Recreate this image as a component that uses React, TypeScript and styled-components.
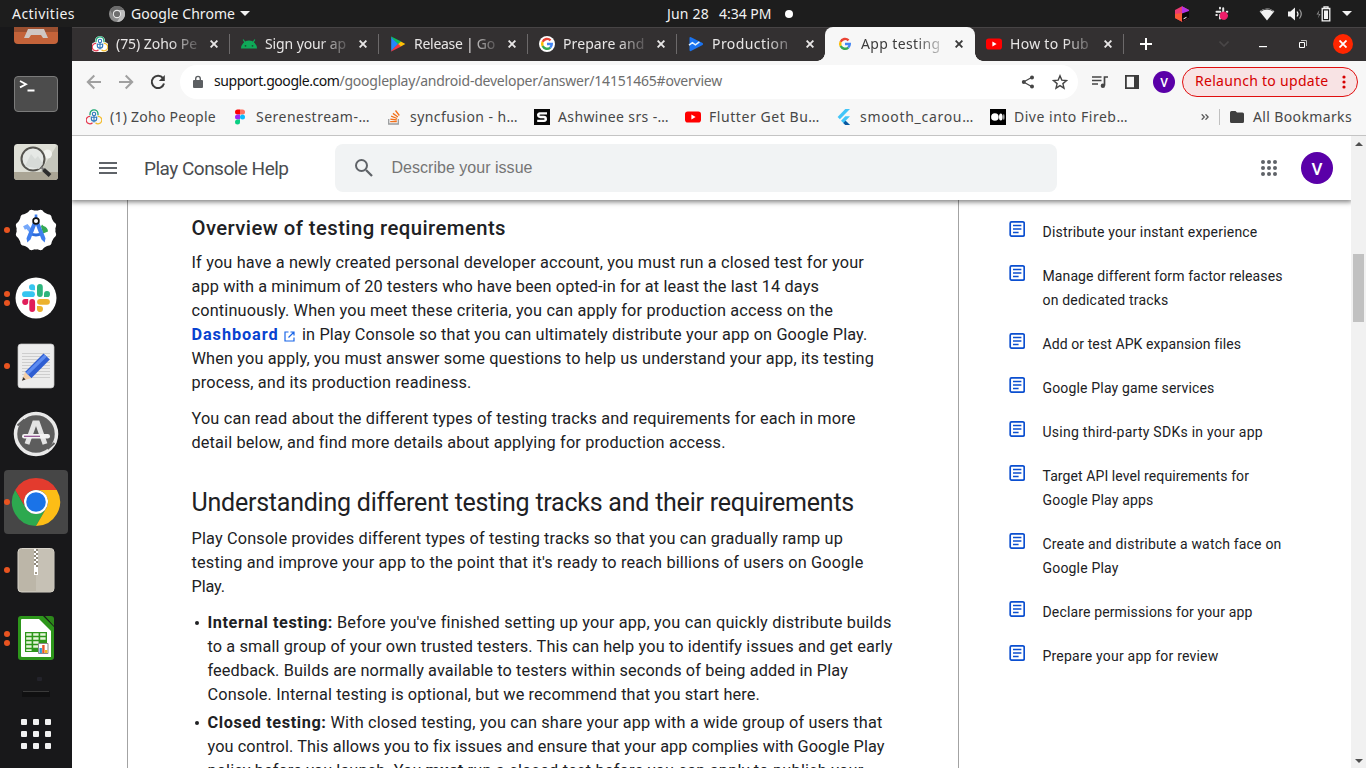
import React, { useLayoutEffect, useRef, useState } from 'react';
import styled, { createGlobalStyle, css } from 'styled-components';

const shellFont = "'Noto Sans', 'Open Sans', sans-serif";
const pageFont = "Roboto, 'Liberation Sans', sans-serif";

const GlobalStyle = createGlobalStyle`
  * { box-sizing: border-box; }
  body { margin: 0; background: #1d1d1d; overflow: hidden; }
  svg { display: block; flex: none; }
`;

/* ---------- text tracked to a set width ---------- */

const Tracked = styled.span`
  display: inline-block;
  white-space: nowrap;
  flex: none;
`;

function Fit({ w, children }: { w: number; children: React.ReactNode }) {
  const ref = useRef<HTMLSpanElement>(null);
  const [spacing, setSpacing] = useState(0);
  useLayoutEffect(() => {
    const el = ref.current;
    if (!el) return;
    const previous = el.style.letterSpacing;
    el.style.letterSpacing = '0px';
    const natural = el.getBoundingClientRect().width;
    el.style.letterSpacing = previous;
    const count = (el.textContent || '').length;
    if (count > 0) setSpacing((w - natural) / count);
  }, [w]);
  return (
    <Tracked ref={ref} style={{ letterSpacing: `${spacing}px` }}>
      {children}
    </Tracked>
  );
}

/* ---------- desktop frame ---------- */

const Desktop = styled.div`
  width: 1366px;
  height: 768px;
  display: grid;
  grid-template-rows: 27px 741px;
  overflow: hidden;
  font-family: ${shellFont};
`;

const TopBar = styled.header`
  display: grid;
  grid-template-columns: 1fr auto 1fr;
  align-items: center;
  background: #1d1d1d;
  color: #f2f2f2;
  font-size: 14px;
  line-height: 26px;
  z-index: 2;
`;

const TopGroup = styled.div<{ $end?: boolean }>`
  display: flex;
  align-items: center;
  height: 27px;
  ${(p) => p.$end && css`justify-content: flex-end;`}
`;

const Space = styled.span<{ $w: number }>`
  flex: none;
  width: ${(p) => p.$w}px;
`;

const Caret = styled.span`
  border: 5px solid transparent;
  border-top-color: #f2f2f2;
  border-bottom: 0;
`;

const Dot = styled.span`
  width: 8px;
  height: 8px;
  border-radius: 50%;
  background: #fff;
`;

const Workspace = styled.div`
  display: flex;
  min-height: 0;
`;

const Dock = styled.nav`
  width: 72px;
  flex: none;
  background: #18181a;
  overflow: hidden;
  display: flex;
  flex-direction: column;
`;

const DockApps = styled.div`
  height: 673px;
  flex: none;
  overflow: hidden;
  display: flex;
  flex-direction: column;
  justify-content: flex-end;
`;

const DockItem = styled.div<{ $h?: number }>`
  height: ${(p) => p.$h ?? 68}px;
  flex: none;
  display: flex;
  align-items: center;
  padding: 0 4px;
`;

const DockTile = styled.div<{ $active?: boolean }>`
  width: 64px;
  height: 64px;
  border-radius: 4px;
  background: ${(p) => (p.$active ? '#464646' : 'transparent')};
  display: flex;
  align-items: center;
`;

const Running = styled.div`
  width: 6px;
  display: flex;
  flex-direction: column;
  gap: 3px;
`;

const RunDot = styled.span`
  width: 6px;
  height: 6px;
  border-radius: 50%;
  background: #e95420;
`;

const DockIcon = styled.svg`
  width: 52px;
  height: 52px;
`;

/* ---------- browser chrome ---------- */

const Browser = styled.main`
  flex: 1;
  min-width: 0;
  display: flex;
  flex-direction: column;
  background: #fff;
`;

const TabStrip = styled.div`
  height: 34px;
  flex: none;
  display: flex;
  align-items: center;
  padding-left: 8px;
  background: #333031;
  box-shadow: inset 0 1px #474445;
`;

const TabBox = styled.div<{ $active?: boolean; $bar?: boolean }>`
  position: relative;
  width: 149px;
  height: 34px;
  flex: none;
  display: flex;
  align-items: center;
  padding-left: 12px;
  font-size: 14px;
  color: ${(p) => (p.$active ? '#3c3c3c' : '#e8e6e6')};
  ${(p) =>
    p.$bar &&
    css`
      &::after {
        content: '';
        position: absolute;
        right: -1px;
        top: 7px;
        width: 1px;
        height: 20px;
        background: #6c696a;
      }
    `}
  ${(p) =>
    p.$active &&
    css`
      width: 150px;
      margin-right: -1px;
      background: #f7f7f7;
      border-radius: 8px 8px 0 0;
      &::before,
      &::after {
        content: '';
        position: absolute;
        bottom: 0;
        width: 8px;
        height: 8px;
      }
      &::before {
        left: -8px;
        background: radial-gradient(circle at 0 0, transparent 7.5px, #f7f7f7 8px);
      }
      &::after {
        right: -8px;
        background: radial-gradient(circle at 100% 0, transparent 7.5px, #f7f7f7 8px);
      }
    `}
`;

const TabTitle = styled.span`
  width: 82px;
  margin-left: 8px;
  white-space: nowrap;
  line-height: 20px;
  mask-image: linear-gradient(90deg, #000 66%, transparent 108%);
`;

const CloseMark = styled.svg`
  width: 8px;
  height: 8px;
  margin-left: 12px;
  fill: none;
  stroke: currentColor;
  stroke-width: 1.9;
`;

const WindowClose = styled.span`
  width: 20px;
  height: 20px;
  border-radius: 50%;
  background: #ff2600;
  display: flex;
  align-items: center;
  justify-content: center;
`;

const Toolbar = styled.div`
  height: 42px;
  flex: none;
  display: flex;
  align-items: center;
  background: #f7f7f7;
  padding: 0 8px 0 14px;
`;

const NavIcon = styled.svg<{ $dim?: boolean }>`
  width: 16px;
  height: 16px;
  margin-right: 16px;
  fill: none;
  stroke: ${(p) => (p.$dim ? '#a0a0a0' : '#3c3c3c')};
  stroke-width: 2;
`;

const AddressBar = styled.div`
  width: 898px;
  height: 34px;
  margin-left: -2px;
  border-radius: 17px;
  background: #fff;
  display: flex;
  align-items: center;
  padding: 0 10px 0 12px;
  font-size: 14px;
  color: #6e6e6e;
`;

const Url = styled.span`
  display: flex;
  line-height: 20px;
  padding-bottom: 2px;
  b { font-weight: 400; color: #111; }
`;

const Grow = styled.span`
  flex: 1;
`;

const Avatar = styled.span<{ $d: number; $font: number }>`
  width: ${(p) => p.$d}px;
  height: ${(p) => p.$d}px;
  border-radius: 50%;
  background: #5a00a8;
  color: #fff;
  display: flex;
  align-items: center;
  justify-content: center;
  flex: none;
  padding-top: 1px;
  font: 500 ${(p) => p.$font}px ${pageFont};
`;

const Relaunch = styled.button`
  width: 176px;
  height: 30px;
  flex: none;
  margin: 0 0 0 7px;
  padding: 0 11px 0 12px;
  border: 1px solid #e00f0f;
  border-radius: 15px;
  background: #f8e3e4;
  color: #d50000;
  display: flex;
  align-items: center;
  justify-content: space-between;
  font: 14px/20px ${shellFont};
  span { padding-bottom: 2px; }
`;

const Bookmarks = styled.div`
  height: 33px;
  flex: none;
  display: flex;
  align-items: center;
  padding: 0 14px 4px;
  background: #f7f7f7;
  border-bottom: 1px solid #c4c4c4;
  color: #474747;
  font-size: 14px;
  line-height: 20px;
`;

const Bookmark = styled.div`
  display: flex;
  align-items: center;
  gap: 8px;
  margin-right: 16px;
`;

const Divider = styled.span`
  width: 1px;
  height: 16px;
  background: #c0c0c0;
`;

/* ---------- page ---------- */

const Viewport = styled.div`
  flex: 1;
  min-height: 0;
  display: flex;
`;

const Page = styled.div`
  width: 1279px;
  display: flex;
  flex-direction: column;
  overflow: hidden;
  font-family: ${pageFont};
  color: #202124;
`;

const PageHeader = styled.div`
  height: 64px;
  flex: none;
  display: flex;
  align-items: center;
  padding: 0 18px 0 27px;
  background: #fff;
  box-shadow: 0 1px 5px 1px rgba(0, 0, 0, 0.5);
  z-index: 1;
`;

const PageTitle = styled.div`
  width: 191px;
  margin-left: 27px;
  padding-top: 2px;
  font-size: 19px;
  line-height: 24px;
  color: #4a4c50;
`;

const SearchBox = styled.div`
  width: 722px;
  height: 48px;
  border-radius: 8px;
  background: #f1f3f4;
  display: flex;
  align-items: center;
  padding: 0 0 1px 17px;
  gap: 15.5px;
  font: 16px 'Liberation Sans', sans-serif;
  color: #757575;
`;

const Columns = styled.div`
  flex: 1;
  min-height: 0;
  display: flex;
  padding-left: 55px;
`;

const Article = styled.article`
  width: 832px;
  flex: none;
  border: solid #a3a3a3;
  border-width: 0 1px;
  padding: 16px 0 0 63.5px;
  font-size: 16.3px;
  line-height: 24px;
  overflow: hidden;
`;

const Subheading = styled.h3`
  margin: 0 0 11px;
  font-size: 20.3px;
  line-height: 24px;
  font-weight: 500;
`;

const Heading = styled.h2`
  margin: 32px 0 8px;
  font-size: 25px;
  line-height: 32px;
  font-weight: 400;
`;

const Paragraph = styled.p`
  margin: 0 0 12px;
`;

const Line = styled.span`
  display: flex;
  height: 24px;
  white-space: pre;
`;

const Bullets = styled.ul`
  margin: 0;
  padding: 0;
  list-style: none;
`;

const Bullet = styled.li`
  position: relative;
  margin-bottom: 4px;
  padding-left: 16px;
  b { font-weight: 700; }
  &::before {
    content: '';
    position: absolute;
    left: 3px;
    top: 10px;
    width: 4px;
    height: 4px;
    border-radius: 50%;
    background: #202124;
  }
`;

const DashLink = styled.a`
  display: flex;
  align-items: center;
  width: 110.5px;
  font-weight: 700;
  color: #0842d0;
  svg { margin: 2px 0 0 5px; }
`;

const Aside = styled.aside`
  display: flex;
  flex-direction: column;
  gap: 20px;
  padding: 20px 0 0 50px;
  font-size: 14px;
  line-height: 24px;
`;

const AsideItem = styled.div`
  display: flex;
  gap: 17.5px;
  svg { margin-top: 1px; }
`;

const Scrollbar = styled.div`
  width: 15px;
  flex: none;
  background: #f1f1f1;
  display: flex;
  flex-direction: column;
  align-items: center;
  padding: 6px 0 5px;
  justify-content: space-between;
`;

const ScrollTrack = styled.div`
  flex: 1;
  padding-top: 108px;
`;

const Thumb = styled.div`
  width: 11px;
  height: 68px;
  background: #c1c1c1;
`;

const ScrollArrow = styled.span<{ $down?: boolean }>`
  border: 4px solid transparent;
  ${(p) => (p.$down ? 'border-top-color: #505050; border-bottom: 0;' : 'border-bottom-color: #505050; border-top: 0;')}
`;

/* ---------- small logos ---------- */

const ZohoIcon = ({ light }: { light?: boolean }) => (
  <svg width="16" height="16" viewBox="0 0 16 16" fill="none" strokeWidth="1.3">
    {light && <path d="M8 0a5 5 0 0 1 5 6a5 5 0 0 1-2 10H5A5 5 0 0 1 3 6a5 5 0 0 1 5-6z" fill="#fff" />}
    <path d="M4 6.200V4.900a4 4 0 0 1 8 0v1.300" stroke="#1ca672" />
    <path d="M4.200 7.400a3.700 3.700 0 1 0 2.300 6.300" stroke="#e5384f" />
    <path d="M11.800 7.400a3.700 3.700 0 1 1-2.300 6.300" stroke="#f4bd2d" />
    <circle cx="8" cy="5" r="1.700" stroke="#2d78bc" strokeWidth="1.100" />
    <path d="M5.300 7.500v2a2.700 2.700 0 0 0 5.400 0v-2M5.300 8.200h5.400M8 7v6.500" stroke="#2d78bc" strokeWidth="1.100" />
  </svg>
);

const AndroidIcon = () => (
  <svg width="16" height="16" viewBox="0 0 16 16">
    <path d="M0 12.600a8 8 0 0 1 16 0z" fill="#0fa958" />
    <path d="M2.200 3.500l2.300 4M13.800 3.500l-2.300 4" stroke="#0fa958" strokeWidth="1.200" />
    <circle cx="4.500" cy="9.800" r=".9" fill="#1b4b34" />
    <circle cx="11.500" cy="9.800" r=".9" fill="#1b4b34" />
  </svg>
);

const PlayIcon = () => (
  <svg width="16" height="16" viewBox="0 0 16 16">
    <path d="M1.200.8v14.400L8.500 8z" fill="#2486fb" />
    <path d="M1.200.6l10 5L8.300 8.300 1 1z" fill="#0bc15c" />
    <path d="M1.200 15.400l10-5L8.300 7.700 1 15z" fill="#f4353f" />
    <path d="M10.900 5.400L15.300 8l-4.400 2.600L8.200 8z" fill="#ffc107" />
  </svg>
);

const GoogleIcon = ({ disc }: { disc?: boolean }) => (
  <svg width="16" height="16" viewBox="0 0 16 16" fill="none" strokeWidth="2.500">
    {disc && <circle cx="8" cy="8" r="8" fill="#fff" />}
    <g transform="translate(0.3 0.3) scale(.96)">
      <path d="M11.700 4.200A5 5 0 0 0 3.500 5.800" stroke="#ea4335" />
      <path d="M3.500 5.800a5 5 0 0 0 0 4.400" stroke="#fbbc05" />
      <path d="M3.500 10.200a5 5 0 0 0 7.900 1.500" stroke="#34a853" />
      <path d="M11.400 11.700A5 5 0 0 0 13 8H8" stroke="#4285f4" />
    </g>
  </svg>
);

const ConsoleIcon = () => (
  <svg width="16" height="16" viewBox="0 0 16 16">
    <path d="M1.500 2Q1.500.4 3 1.200L14.600 7Q15.600 8 14.600 9L3 15Q1.500 15.600 1.500 14z" fill="#1a73f0" />
    <path d="M1 9.200l3.400-2.600 3 2.200 4-3" fill="none" stroke="#e4f3ff" strokeWidth="1.500" />
  </svg>
);

const YoutubeIcon = () => (
  <svg width="16" height="16" viewBox="0 0 16 16">
    <rect y="2.400" width="16" height="11.200" rx="2.800" fill="#f00" />
    <path d="M6.400 5.600v4.800L10.600 8z" fill="#fff" />
  </svg>
);

const FigmaIcon = () => (
  <svg width="16" height="16" viewBox="0 0 16 16">
    <path d="M8 .5H5.500a2.500 2.500 0 0 0 0 5H8z" fill="#f00" />
    <path d="M8 .5h2.500a2.500 2.500 0 0 1 0 5H8z" fill="#ff7262" />
    <path d="M8 5.500H5.500a2.500 2.500 0 0 0 0 5H8z" fill="#9d28f5" />
    <circle cx="10.500" cy="8" r="2.500" fill="#0cbcfe" />
    <path d="M8 10.500H5.500a2.500 2.500 0 1 0 2.500 2.500z" fill="#0acf83" />
  </svg>
);

const StackIcon = () => (
  <svg width="16" height="16" viewBox="0 0 16 16" fill="none" strokeWidth="1.300">
    <path d="M2.700 10v5h9.600v-5" stroke="#9a9c9e" />
    <path d="M4.200 12.600h6.600M4.300 10.100l6.500.9M5.100 7.200l6 2.300M6.900 4.400l5 3.600M9.500 1.500l3.800 5" stroke="#f2711c" />
  </svg>
);

const SquareIcon = () => (
  <svg width="16" height="16" viewBox="0 0 16 16" fill="none">
    <path d="M0 0h16v16H0z" fill="#080808" />
    <path d="M13 4.300H6.500Q4.200 4.300 4.200 6.100T6.500 8h3.300q2 0 2 1.900t-2 1.900H3.200" stroke="#fff" strokeWidth="2.300" />
    <path d="M6 2.800L3.200 5.300v1.500zM10 13.200l2.800-2.500V9.200z" fill="#fff" />
  </svg>
);

const FlutterIcon = () => (
  <svg width="16" height="16" viewBox="0 0 16 16">
    <path d="M9.300 0H14L3.900 10.200 1.600 8z" fill="#42c5f8" />
    <path d="M9.300 7.300H14L9.600 11.700 14 16H9.300L5 11.700z" fill="#42c5f8" />
    <path d="M7.300 14l2.300-2.300L14 16H9.300z" fill="#0b579f" />
  </svg>
);

const MediumIcon = () => (
  <svg width="16" height="16" viewBox="0 0 16 16" fill="#fff">
    <path d="M0 0h16v16H0z" fill="#000" />
    <circle cx="4.900" cy="8" r="3.800" />
    <ellipse cx="10.800" cy="8" rx="1.800" ry="3.500" />
    <ellipse cx="13.800" cy="8" rx=".7" ry="3" fill="#bbb" />
  </svg>
);

const ArticleIcon = () => (
  <svg width="16" height="16" viewBox="0 0 16 16" fill="none" stroke="#0b4fd0" strokeWidth="1.700">
    <rect x="1.200" y=".9" width="14" height="14.200" rx="1.300" />
    <path d="M4 4.500h8.400M4 8h8.400M4 11.500h5.600" strokeWidth="1.500" />
  </svg>
);

const AppGrid = ({ color }: { color: string }) => (
  <svg width="16" height="16" viewBox="0 0 16 16" fill={color}>
    {[2, 8, 14].map((y) => [2, 8, 14].map((x) => <circle key={`${x}-${y}`} cx={x} cy={y} r="2" />))}
  </svg>
);

const Cross = () => (
  <CloseMark viewBox="0 0 8 8">
    <path d="M.6.6l6.800 6.800M7.400.6L.6 7.400" />
  </CloseMark>
);

/* ---------- dock drawings (52 × 52, centred on 26,26) ---------- */

const dockArt: Record<string, React.ReactNode> = {
  software: (
    <>
      <rect x="4" y="4" width="44" height="40" rx="4" fill="#c4633a" />
      <path d="M4 26h44v6H4z" fill="#9a4f30" />
      <path d="M14 38l4-9h16l4 9h-5l-2-3H21l-2 3z" fill="#cfc6c3" />
    </>
  ),
  terminal: (
    <>
      <rect x="4.500" y="8.500" width="43" height="35" rx="3.500" fill="#4c4c4c" stroke="#7b7b7b" />
      <path d="M10 13l6 3.200-6 3.200M17.500 22.500h7" fill="none" stroke="#fff" strokeWidth="1.800" />
    </>
  ),
  viewer: (
    <>
      <rect x="4" y="8" width="44" height="36" rx="3.500" fill="#dedfd6" />
      <path d="M4 36h44v4.500a3.500 3.500 0 0 1-3.500 3.500h-37A3.500 3.500 0 0 1 4 40.500z" fill="#aaa595" />
      <path d="M30 36L47 9q1 1 1 2v25z" fill="#c5c6bc" />
      <circle cx="37.500" cy="18" r="4.500" fill="#f2f3ef" />
      <circle cx="23" cy="23" r="11.500" fill="#e6e9e6" stroke="#55544f" strokeWidth="2" />
      <path d="M15 30l6-12 4 5 3-3 5 8-4 5z" fill="#d7dbd8" />
      <path d="M31 31l3 3" stroke="#777" strokeWidth="2" />
      <path d="M33.500 33.500l6.500 6" stroke="#2d2d2d" strokeWidth="4" />
    </>
  ),
  studio: (
    <>
      {[0, 30, 60].map((a) => (
        <rect key={a} x="10.300" y="10.300" width="31.400" height="31.400" rx="4" fill="#fff" transform={`rotate(${a} 26 26)`} />
      ))}
      <circle cx="26" cy="26" r="19.500" fill="#fff" />
      <path d="M31 22.500l1-2 1.500 1.500a6 6 0 0 1 4.500 5.500l-5 2z" fill="#34a853" />
      <path d="M14 24l3-1.500 5 6" fill="none" stroke="#75a8fa" strokeWidth="4" />
      <path d="M20.500 29.500q5.500 3 11 0" fill="none" stroke="#2b6bdc" strokeWidth="3" />
      <path d="M25 13l3 3-7.500 19.500-3.200 3-.8-4.200zM27 13l-3 3 7.500 19.500 3.200 3 .8-4.200z" fill="#3f7fee" />
      <path d="M24.700 10.500h2.600v4h-2.600z" fill="#3f7fee" />
      <circle cx="26" cy="17" r="2.900" fill="#fff" stroke="#111" strokeWidth="1.700" />
    </>
  ),
  slack: (
    <>
      <circle cx="26" cy="26" r="20.500" fill="#fff" />
      <g strokeWidth="5.800" strokeLinecap="round">
        <path d="M15 22.200h7" stroke="#36c5f0" />
        <path d="M29.900 15v7" stroke="#2eb67d" />
        <path d="M30 29.800h7" stroke="#ecb22e" />
        <path d="M22.200 30v7" stroke="#e01e5a" />
      </g>
      <path d="M25 18.200v-2.600a3 3 0 1 0-3 2.600z" fill="#36c5f0" />
      <path d="M34 25.100h2.800a3 3 0 1 0-2.800-3z" fill="#2eb67d" />
      <path d="M27 34v2.800a3 3 0 1 0 3-2.800z" fill="#ecb22e" />
      <path d="M18.200 27h-2.800a3 3 0 1 0 2.800 3z" fill="#e01e5a" />
    </>
  ),
  editor: (
    <>
      <rect x="8" y="4" width="36" height="44" rx="3" fill="#ececec" stroke="#c9c9c9" strokeWidth=".7" />
      <path d="M12 13.500h28M12 16.500h28M12 19.500h28M12 22.500h28M12 25.500h28M12 28.500h28M12 31.500h28M12 34.500h28M12 37.500h28" stroke="#c6c6c6" strokeWidth=".8" />
      <path d="M33.500 13.500l6.300 6L21.300 38.300 15 32z" fill="#2f5ed2" />
      <path d="M34.500 14.500l2.300 2.200L18 35l-2.200-2.200z" fill="#5e8cf0" />
      <path d="M15 32L12 40.500l9.300-2.200z" fill="#f4cfa8" />
      <path d="M13.300 37.300l-1.400 3.500 3.700-1.200z" fill="#333" />
    </>
  ),
  updater: (
    <>
      <circle cx="26" cy="26" r="20.500" fill="#5d5d5d" stroke="#e9e9e9" strokeWidth="3.500" />
      <path d="M7.500 17.500l7-6M37.500 41l7-6" stroke="#5d5d5d" strokeWidth="2" />
      <path d="M17 36l7.500-21h3L35 36" fill="none" stroke="#e4e4e4" strokeWidth="5" />
      <rect x="12" y="26" width="28" height="4.600" rx="2.300" fill="#f3f3f3" />
      <path d="M14 28.300h16" stroke="#8c4a8c" strokeWidth="1.200" />
    </>
  ),
  chrome: (
    <>
      <path d="M5.200 14A24 24 0 0 1 46.800 14H26a12 12 0 0 0-10.400 18z" fill="#e33b2e" />
      <path d="M5.200 14A24 24 0 0 0 26 50l10.400-18A12 12 0 0 1 15.600 32z" fill="#2da94f" />
      <path d="M46.800 14A24 24 0 0 1 26 50l10.400-18A12 12 0 0 0 26 14z" fill="#fdbd16" />
      <circle cx="26" cy="26" r="12" fill="#fff" />
      <circle cx="26" cy="26" r="9.800" fill="#1a73e8" />
    </>
  ),
  archive: (
    <>
      <rect x="8" y="4.500" width="36" height="43.500" rx="3.500" fill="#bcb6a8" stroke="#d8d4ca" />
      <path d="M26 5v42.500h14.500a3 3 0 0 0 3-3V8a3 3 0 0 0-3-3z" fill="#c6c1b5" />
      <path d="M24 5h4v18h-4z" fill="#8f897b" />
      <path d="M25 5v18M27 7v16" stroke="#fff" strokeWidth="2" strokeDasharray="2 2" />
      <path d="M24 23h4v8h-4z" fill="#fff" />
      <path d="M25 28h2v2h-2z" fill="#a59e8e" />
    </>
  ),
  calc: (
    <>
      <path d="M11 4h22l11 11v30a3 3 0 0 1-3 3H11a3 3 0 0 1-3-3V7a3 3 0 0 1 3-3z" fill="#2d961b" />
      <path d="M12 7h17l12 12v26H12q-1 0-1-1V8q0-1 1-1z" fill="#fff" />
      <path d="M35 4h6q3 0 3 3v7z" fill="#2d871b" />
      <path d="M15 20h22v20H15z" fill="#2d961b" />
      <path d="M16.200 21.300h5.400v2.400h-5.400zm7 0h5.400v2.400h-5.400zm7 0h5.400v2.400h-5.400zm-14 4h5.400v2.400h-5.400zm7 0h5.400v2.400h-5.400zm7 0h5.400v2.400h-5.400zm-14 4h5.400v2.400h-5.400zm7 0h5.400v2.400h-5.400zm-7 4h5.400v2.400h-5.400zm7 0h5.400v2.400h-5.400zm-7 4h5.400v1.600h-5.400z" fill="#e4f6d8" />
      <path d="M28.500 31.500h9.500v10h-9.500z" fill="#fff" stroke="#8a8a8a" />
      <path d="M29.500 36h2.400v5h-2.400z" fill="#2a9bd8" />
      <path d="M32.200 33h2.400v8h-2.400z" fill="#e4572e" />
      <path d="M35 38h2.400v3H35z" fill="#f4b81b" />
    </>
  ),
};

const dockEntries: { art: string; dots: number; active?: boolean }[] = [
  { art: 'software', dots: 0 },
  { art: 'terminal', dots: 0 },
  { art: 'viewer', dots: 0 },
  { art: 'studio', dots: 1 },
  { art: 'slack', dots: 2 },
  { art: 'editor', dots: 1 },
  { art: 'updater', dots: 0 },
  { art: 'chrome', dots: 1, active: true },
  { art: 'archive', dots: 1 },
  { art: 'calc', dots: 2 },
];

const tabs: { icon: React.ReactNode; title: string; w: number; active?: boolean; bar?: boolean }[] = [
  { icon: <ZohoIcon light />, title: '(75) Zoho Pe', w: 81, bar: true },
  { icon: <AndroidIcon />, title: 'Sign your ap', w: 81, bar: true },
  { icon: <PlayIcon />, title: 'Release | Go', w: 81, bar: true },
  { icon: <GoogleIcon disc />, title: 'Prepare and', w: 81.5, bar: true },
  { icon: <ConsoleIcon />, title: 'Production', w: 76.5 },
  { icon: <GoogleIcon />, title: 'App testing', w: 79.5, active: true },
  { icon: <YoutubeIcon />, title: 'How to Pub', w: 79, bar: true },
];

const bookmarks: { icon: React.ReactNode; title: string; w: number }[] = [
  { icon: <ZohoIcon />, title: '(1) Zoho People', w: 106 },
  { icon: <FigmaIcon />, title: 'Serenestream-…', w: 114 },
  { icon: <StackIcon />, title: 'syncfusion - h…', w: 108 },
  { icon: <SquareIcon />, title: 'Ashwinee srs -…', w: 111 },
  { icon: <YoutubeIcon />, title: 'Flutter Get Bu…', w: 111 },
  { icon: <FlutterIcon />, title: 'smooth_carou…', w: 114 },
  { icon: <MediumIcon />, title: 'Dive into Fireb…', w: 114 },
];

const related: [string, number][][] = [
  [['Distribute your instant experience', 215]],
  [['Manage different form factor releases', 240], ['on dedicated tracks', 126]],
  [['Add or test APK expansion files', 198]],
  [['Google Play game services', 172]],
  [['Using third-party SDKs in your app', 220.5]],
  [['Target API level requirements for', 206.5], ['Google Play apps', 111]],
  [['Create and distribute a watch face on', 239], ['Google Play', 76]],
  [['Declare permissions for your app', 210]],
  [['Prepare your app for review', 176]],
];

const Lines = ({ rows }: { rows: [string, number][] }) => (
  <>
    {rows.map(([text, w]) => (
      <Line key={text}>
        <Fit w={w}>{text}</Fit>
      </Line>
    ))}
  </>
);

export default function App() {
  return (
    <Desktop>
      <GlobalStyle />
      <TopBar>
        <TopGroup>
          <Space $w={12} />
          <Fit w={63}>Activities</Fit>
          <Space $w={34} />
          <svg width="16" height="16" viewBox="0 0 16 16">
            <circle cx="8" cy="8" r="8" fill="#8c8c8c" />
            <path d="M1 4a8 8 0 0 1 14 0H8a4 4 0 0 0-3.500 6z" fill="#6b6b6b" />
            <path d="M15 4a8 8 0 0 1-7 12l3.500-6A4 4 0 0 0 8 4z" fill="#bdbdbd" />
            <circle cx="8" cy="8" r="4.200" fill="#e8e8e8" />
            <circle cx="8" cy="8" r="3.100" fill="#6e6e6e" />
          </svg>
          <Space $w={6} />
          <Fit w={104}>Google Chrome</Fit>
          <Space $w={5} />
          <Caret />
        </TopGroup>
        <TopGroup>
          <Space $w={94} />
          <Fit w={42}>Jun 28</Fit>
          <Space $w={10} />
          <Fit w={52.5}>4:34 PM</Fit>
          <Space $w={13.5} />
          <Dot />
        </TopGroup>
        <TopGroup $end>
          <svg width="16" height="16" viewBox="0 0 16 16">
            <path d="M8 .3l7 3.700v8L8 15.700 1 12V4z" fill="#ec3a72" />
            <path d="M8 .3l7 3.700v4L8 7.500z" fill="#b431e6" />
            <path d="M1 8l7-1v8.700L1 12z" fill="#fb5a37" />
            <path d="M8 7.500L15 5v7l-7 3.700z" fill="#0a0a0a" />
            <path d="M9.500 12.800l3-1.500" stroke="#fff" />
          </svg>
          <Space $w={24} />
          <svg width="16" height="16" viewBox="0 0 16 16" stroke="#e8e8e8" strokeWidth="2" strokeLinecap="round">
            <path d="M2.500 5.800h3.800M6 1.800v.8M9.200 2.200v3.800M12.800 5.800h.5M2.300 9h.6M6 9v3.500" />
            <circle cx="9.700" cy="9.700" r="3.700" fill="#f01e6a" stroke="#f01e6a" strokeWidth="1" />
          </svg>
          <Space $w={29} />
          <svg width="16" height="14" viewBox="0 0 16 14">
            <path d="M8 13.500L.6 4.200a11.500 11.500 0 0 1 14.800 0z" fill="#f2f2f2" />
            <path d="M1.700 4.300a10.300 10.300 0 0 1 12.600 0" fill="none" stroke="#1d1d1d" strokeWidth=".8" />
          </svg>
          <Space $w={13} />
          <svg width="15" height="14" viewBox="0 0 15 14" fill="none" stroke="#f2f2f2" strokeWidth="1.200">
            <path d="M0 4.500h2.500L7 .5v13l-4.500-4H0z" fill="#f2f2f2" stroke="none" />
            <path d="M9 4.500q2 2.500 0 5" />
            <path d="M11.500 2.500q3.500 4.500 0 9" stroke="#a0a0a0" />
          </svg>
          <Space $w={13} />
          <svg width="15" height="16" viewBox="0 0 15 16">
            <path d="M3.300 4L.5 8.500H3L1.700 12.500 4.500 8H2.500z" fill="#8a8a8a" />
            <path d="M6.200 2.500h7.600v12.300H6.200zM8 2V.8h4V2" fill="none" stroke="#f2f2f2" strokeWidth="1.300" />
            <path d="M8 4.500h4V13H8z" fill="#f2f2f2" />
          </svg>
          <Space $w={11} />
          <Caret />
          <Space $w={14} />
        </TopGroup>
      </TopBar>

      <Workspace>
        <Dock>
          <DockApps>
            {dockEntries.map(({ art, dots, active }) => (
              <DockItem key={art}>
                <DockTile $active={active}>
                  <Running>
                    {Array.from({ length: dots }, (_, i) => (
                      <RunDot key={i} />
                    ))}
                  </Running>
                  <DockIcon viewBox="0 0 52 52">{dockArt[art]}</DockIcon>
                </DockTile>
              </DockItem>
            ))}
            <DockItem $h={28}>
              <svg width="64" height="28" viewBox="0 0 64 28">
                <rect x="33" y="5" width="5" height="4" rx="1" fill="#23232b" />
                <path d="M18 25v-4q0-2 2-2h24q2 0 2 2v4z" fill="#101011" />
                <path d="M19 19.500h26" stroke="#3a3a3a" />
              </svg>
            </DockItem>
          </DockApps>
          <DockItem>
            <Space $w={17} />
            <svg width="30" height="30" viewBox="0 0 30 30" fill="#f2f2f2">
              {[0, 12, 24].map((y) =>
                [0, 12, 24].map((x) => <rect key={`${x}-${y}`} x={x} y={y} width="6" height="6" rx="1" />),
              )}
            </svg>
          </DockItem>
        </Dock>

        <Browser>
          <TabStrip>
            {tabs.map((t) => (
              <TabBox key={t.title} $active={t.active} $bar={t.bar}>
                {t.icon}
                <TabTitle>
                  <Fit w={t.w}>{t.title}</Fit>
                </TabTitle>
                <Cross />
              </TabBox>
            ))}
            <Space $w={17} />
            <svg width="12" height="12" viewBox="0 0 12 12" stroke="#fff" strokeWidth="2">
              <path d="M6 0v12M0 6h12" />
            </svg>
            <Space $w={67} />
            <svg width="10" height="6" viewBox="0 0 10 6" fill="none" stroke="#494647" strokeWidth="1.600">
              <path d="M.5.5L5 5 9.500.5" />
            </svg>
            <Space $w={30} />
            <svg width="8" height="8" viewBox="0 0 8 8">
              <path d="M0 6h8v1.200H0z" fill="#fff" />
            </svg>
            <Space $w={32} />
            <svg width="8" height="8" viewBox="0 0 8 8" fill="none" stroke="#fff">
              <path d="M.5 2.500h5v5h-5z" />
              <path d="M2 .5h5.500V6" stroke="#bbb" />
            </svg>
            <Space $w={26} />
            <WindowClose>
              <svg width="8" height="8" viewBox="0 0 8 8" stroke="#fff" strokeWidth="1.800">
                <path d="M.5.5l7 7M7.500.5l-7 7" />
              </svg>
            </WindowClose>
          </TabStrip>

          <Toolbar>
            <NavIcon $dim viewBox="0 0 16 16"><path d="M15 8H2M8.300 1.500L1.800 8l6.500 6.500" /></NavIcon>
            <NavIcon $dim viewBox="0 0 16 16"><path d="M1 8h13M7.700 1.500L14.200 8l-6.500 6.500" /></NavIcon>
            <NavIcon viewBox="0 0 16 16">
              <path d="M13 4.200A6.200 6.200 0 1 0 14 9.500" />
              <path d="M14.800 1v6H8.800z" fill="#3c3c3c" stroke="none" />
            </NavIcon>
            <AddressBar>
              <svg width="12" height="14" viewBox="0 0 12 14">
                <path d="M2 5h8q1 0 1 1v6q0 1-1 1H2q-1 0-1-1V6q0-1 1-1z" fill="#5c5f62" />
                <path d="M3.700 5.500V3.700a2.300 2.300 0 0 1 4.600 0v1.800" fill="none" stroke="#5c5f62" strokeWidth="1.400" />
              </svg>
              <Space $w={10} />
              <Url>
                <b><Fit w={125.5}>support.google.com</Fit></b>
                <Fit w={382.5}>/googleplay/android-developer/answer/14151465#overview</Fit>
              </Url>
              <Grow />
              <svg width="14" height="14" viewBox="0 0 14 14" fill="#454545">
                <path d="M2.500 7l8.500-4.700M2.500 7l8.500 4.700" stroke="#454545" strokeWidth="1.300" />
                <circle cx="2.800" cy="7" r="2" /><circle cx="11" cy="2.500" r="2" /><circle cx="11" cy="11.500" r="2" />
              </svg>
              <Space $w={17} />
              <svg width="16" height="16" viewBox="0 0 16 16" fill="none" stroke="#454545" strokeWidth="1.400">
                <path d="M8 1.800l1.800 4.300 4.700.4-3.600 3.100 1.100 4.600L8 11.700l-4 2.500 1.100-4.600-3.600-3.100 4.700-.4z" />
              </svg>
            </AddressBar>
            <Space $w={14} />
            <svg width="16" height="14" viewBox="0 0 16 14" fill="none" stroke="#454545" strokeWidth="1.700">
              <path d="M0 2h9.500M0 5.500h9.500M0 9h6" />
              <path d="M12.500 10.500V2H16" />
              <circle cx="10.900" cy="10.800" r="2.200" fill="#454545" stroke="none" />
            </svg>
            <Space $w={17} />
            <svg width="14" height="14" viewBox="0 0 14 14">
              <path d="M0 0h14v14H0zM1.800 1.800v10.400h7.200V1.800z" fill="#3c3c3c" fillRule="evenodd" />
            </svg>
            <Space $w={14} />
            <Avatar $d={22} $font={12}>V</Avatar>
            <Relaunch>
              <Fit w={133.5}>Relaunch to update</Fit>
              <svg width="4" height="14" viewBox="0 0 4 14" fill="#d50000">
                <circle cx="2" cy="2" r="1.600" /><circle cx="2" cy="7" r="1.600" /><circle cx="2" cy="12" r="1.600" />
              </svg>
            </Relaunch>
          </Toolbar>

          <Bookmarks>
            {bookmarks.map((b) => (
              <Bookmark key={b.title}>
                {b.icon}
                <Fit w={b.w}>{b.title}</Fit>
              </Bookmark>
            ))}
            <Grow />
            <svg width="8" height="6" viewBox="0 0 8 6" fill="none" stroke="#5a5a5a" strokeWidth="1.300">
              <path d="M.7.3L3.300 3 .7 5.700M4.500.3L7.100 3 4.500 5.700" />
            </svg>
            <Space $w={10} />
            <Divider />
            <Space $w={10} />
            <svg width="14" height="12" viewBox="0 0 14 12">
              <path d="M1.500 0h4l1.500 1.500h5.500Q14 1.500 14 3v7.500q0 1.500-1.500 1.500h-11Q0 12 0 10.500v-9Q0 0 1.500 0z" fill="#3f3f3f" />
            </svg>
            <Space $w={9} />
            <Fit w={99}>All Bookmarks</Fit>
          </Bookmarks>

          <Viewport>
            <Page>
              <PageHeader>
                <svg width="18" height="12" viewBox="0 0 18 12" fill="#5f6368">
                  <path d="M0 0h18v2H0zM0 5h18v2H0zM0 10h18v2H0z" />
                </svg>
                <PageTitle><Fit w={144.5}>Play Console Help</Fit></PageTitle>
                <SearchBox>
                  <svg width="24" height="24" viewBox="0 0 24 24" fill="none" stroke="#5f6368" strokeWidth="2">
                    <circle cx="9.500" cy="9.500" r="5.500" />
                    <path d="M14 14l6 6" strokeWidth="2.300" />
                  </svg>
                  <Fit w={141}>Describe your issue</Fit>
                </SearchBox>
                <Grow />
                <AppGrid color="#5f6368" />
                <Space $w={24} />
                <Avatar $d={32} $font={17}>V</Avatar>
              </PageHeader>

              <Columns>
                <Article>
                  <Subheading><Fit w={314.5}>Overview of testing requirements</Fit></Subheading>
                  <Paragraph>
                    <Lines
                      rows={[
                        ['If you have a newly created personal developer account, you must run a closed test for your', 672.5],
                        ['app with a minimum of 20 testers who have been opted-in for at least the last 14 days', 627.5],
                        ['continuously. When you meet these criteria, you can apply for production access on the', 641.5],
                      ]}
                    />
                    <Line>
                      <DashLink>
                        <Fit w={87}>Dashboard</Fit>
                        <svg width="11" height="11" viewBox="0 0 11 11" fill="none" stroke="#1a66e8" strokeWidth="1.200">
                          <path d="M4.500 1H1v9h9V6.500M6.500 1H10v3.500M10 1L4.500 6.500" />
                        </svg>
                      </DashLink>
                      <Fit w={565.5}>in Play Console so that you can ultimately distribute your app on Google Play.</Fit>
                    </Line>
                    <Lines
                      rows={[
                        ['When you apply, you must answer some questions to help us understand your app, its testing', 682.5],
                        ['process, and its production readiness.', 280],
                      ]}
                    />
                  </Paragraph>
                  <Paragraph>
                    <Lines
                      rows={[
                        ['You can read about the different types of testing tracks and requirements for each in more', 664],
                        ['detail below, and find more details about applying for production access.', 533.5],
                      ]}
                    />
                  </Paragraph>
                  <Heading><Fit w={662.5}>Understanding different testing tracks and their requirements</Fit></Heading>
                  <Paragraph>
                    <Lines
                      rows={[
                        ['Play Console provides different types of testing tracks so that you can gradually ramp up', 651.5],
                        ["testing and improve your app to the point that it's ready to reach billions of users on Google", 672],
                        ['Play.', 33.5],
                      ]}
                    />
                  </Paragraph>
                  <Bullets>
                    <Bullet>
                      <Line>
                        <b><Fit w={125.5}>Internal testing:</Fit></b>
                        <Space $w={4} />
                        <Fit w={554}>Before you've finished setting up your app, you can quickly distribute builds</Fit>
                      </Line>
                      <Lines
                        rows={[
                          ['to a small group of your own trusted testers. This can help you to identify issues and get early', 685],
                          ['feedback. Builds are normally available to testers within seconds of being added in Play', 640.5],
                          ['Console. Internal testing is optional, but we recommend that you start here.', 552.5],
                        ]}
                      />
                    </Bullet>
                    <Bullet>
                      <Line>
                        <b><Fit w={119}>Closed testing:</Fit></b>
                        <Space $w={4} />
                        <Fit w={552}>With closed testing, you can share your app with a wide group of users that</Fit>
                      </Line>
                      <Lines rows={[['you control. This allows you to fix issues and ensure that your app complies with Google Play', 676.5]]} />
                      <Line>
                        <Fit w={214}>policy before you launch. You</Fit>
                        <Space $w={4} />
                        <b><Fit w={38}>must</Fit></b>
                        <Space $w={4} />
                        <Fit w={396}>run a closed test before you can apply to publish your</Fit>
                      </Line>
                    </Bullet>
                  </Bullets>
                </Article>
                <Aside>
                  {related.map((rows) => (
                    <AsideItem key={rows[0][0]}>
                      <ArticleIcon />
                      <div><Lines rows={rows} /></div>
                    </AsideItem>
                  ))}
                </Aside>
              </Columns>
            </Page>
            <Scrollbar>
              <ScrollArrow />
              <ScrollTrack><Thumb /></ScrollTrack>
              <ScrollArrow $down />
            </Scrollbar>
          </Viewport>
        </Browser>
      </Workspace>
    </Desktop>
  );
}
